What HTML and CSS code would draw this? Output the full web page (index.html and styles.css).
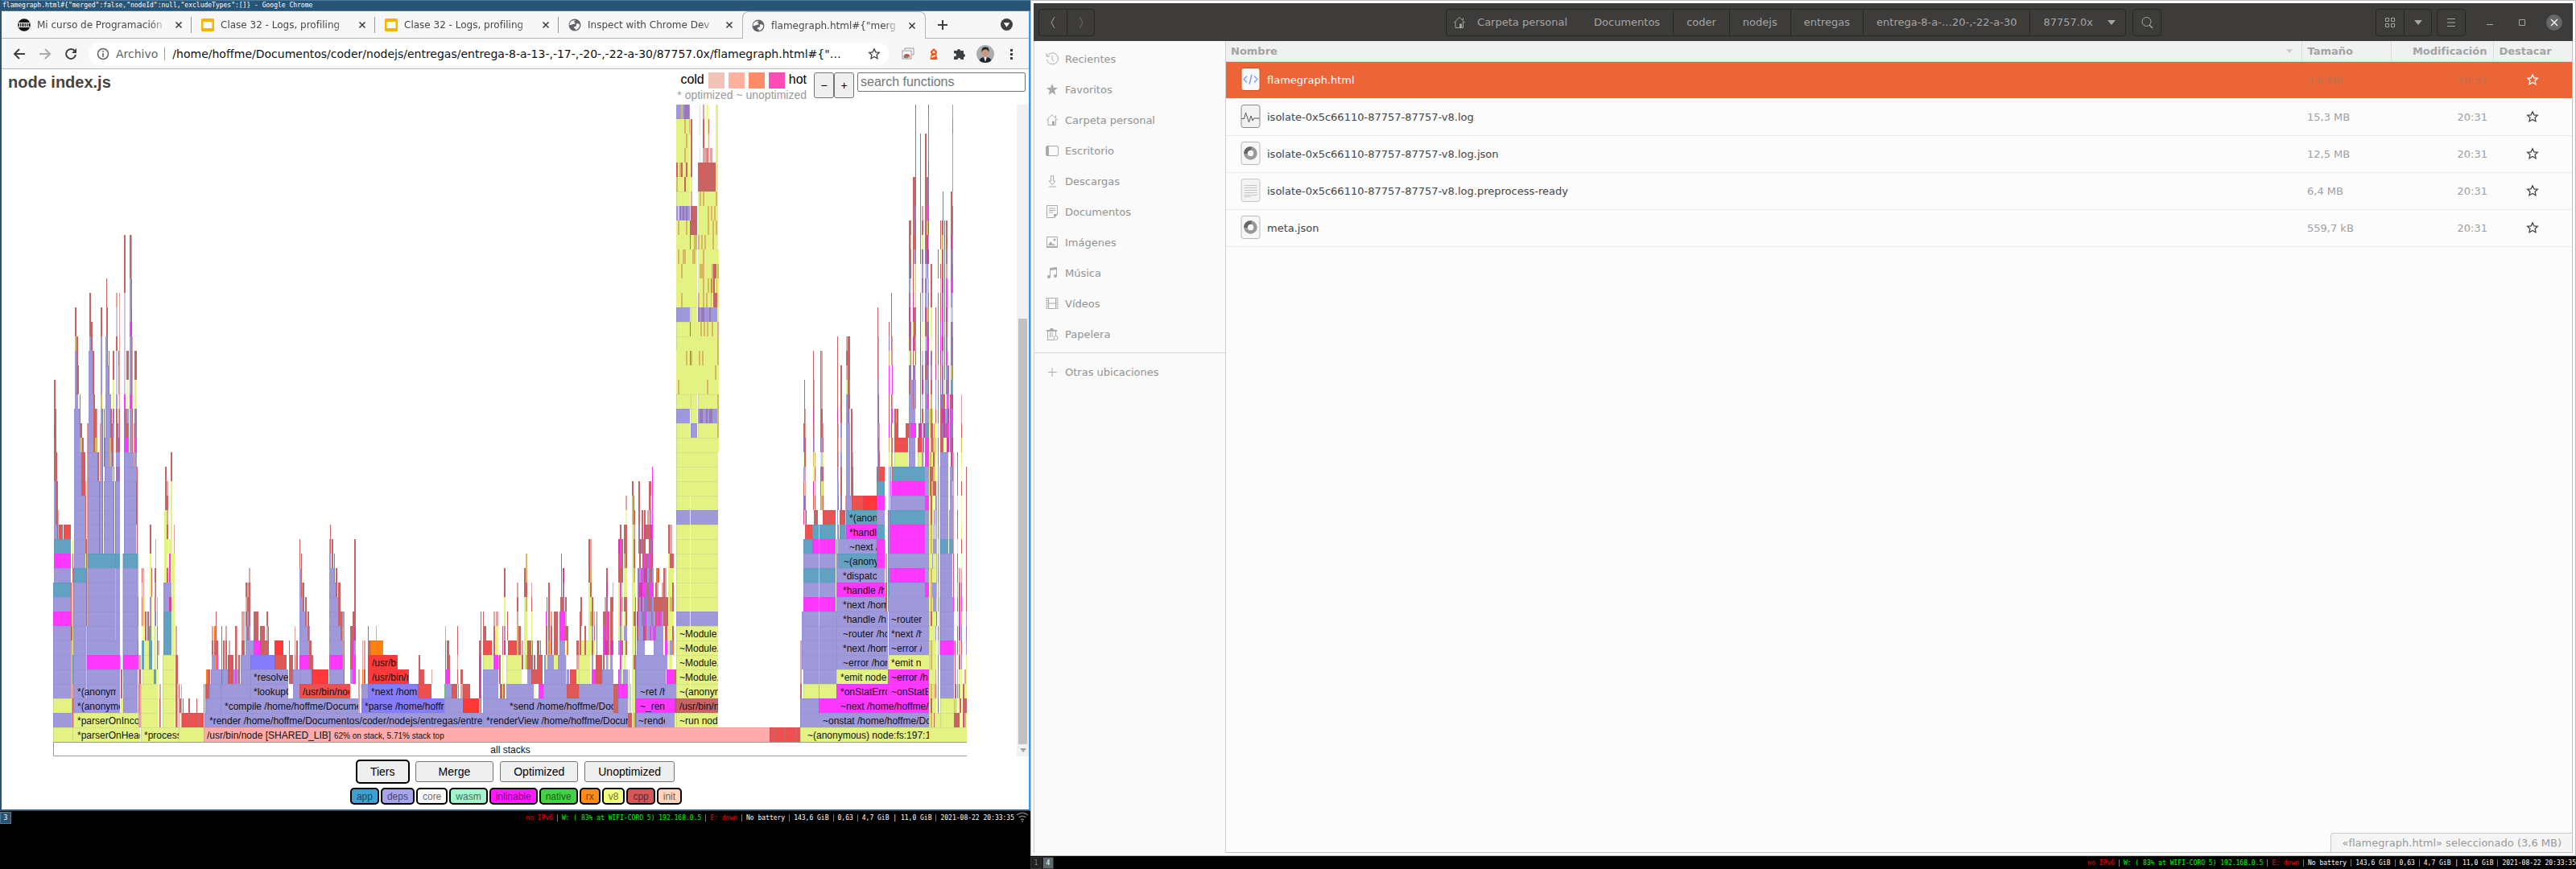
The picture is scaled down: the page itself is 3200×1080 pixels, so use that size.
FILE: index.html
```html
<!DOCTYPE html>
<html lang="es">
<head>
<meta charset="utf-8">
<title>flamegraph.html</title>
<link rel="stylesheet" href="styles.css">
</head>
<body>
<svg class="defs" aria-hidden="true">
  <symbol id="globe" viewBox="0 0 16 16"><circle cx="8" cy="8" r="7.5" fill="#5f6368"/><path d="M9 2.5c-2 .3-2.500 1.500-1 2.500s-.5 2-2 2-2 1.500-4.500 1.200C1.500 5 4 1.500 9 2.500zM10 6.500c2-.5 3.500 0 4.300 1.500-.3 3-2.300 5.600-5.300 6.200 0-2-1.500-1.700-2.500-3 1-1.700 3-1 3.500-2.200s-1-1.300 0-2.500z" fill="#f7f7f7"/></symbol>
  <symbol id="slides" viewBox="0 0 16 16"><rect width="16" height="16" rx="1.500" fill="#f7b500"/><rect x="2.500" y="4" width="11" height="8" fill="#fff"/></symbol>
  <symbol id="cross" viewBox="0 0 10 10"><path d="M1.500 1.500l7 7M8.500 1.500l-7 7" stroke="#3c4043" stroke-width="1.600"/></symbol>
  <symbol id="star" viewBox="0 0 16 16"><path d="M8 1.800l1.900 4 4.400.5-3.200 3 .9 4.400L8 11.500l-4 2.200.9-4.400-3.200-3 4.400-.5z" fill="none" stroke="currentColor" stroke-width="1.300"/></symbol>
  <symbol id="home" viewBox="0 0 16 16"><path d="M1 8.500L8 1.500l7 7M3 7v7.500h9.500V7M12.500 5V2.500" fill="none" stroke="currentColor"/><path d="M8 9.500h3V14H8z" fill="currentColor"/></symbol>
  <symbol id="json" viewBox="0 0 24 30"><rect x=".5" y=".5" width="23" height="28" rx="3" fill="#f7f7f7" stroke="#b8b8b8"/><circle cx="12" cy="14.500" r="6" fill="none" stroke="#999" stroke-width="4.500"/><path d="M6 15a6 6 0 0 1 7-6.500" fill="none" stroke="#666" stroke-width="4.500"/></symbol>
  <symbol id="arrow" viewBox="0 0 10 6"><path d="M0 0h10L5 6z" fill="currentColor"/></symbol>
</svg>

<main class="desktop">
  <section class="monitor monitor-left">
    <div class="chrome">
      <header class="wm-title">flamegraph.html#{"merged":false,"nodeId":null,"excludeTypes":[]} - Google Chrome</header>
      <nav class="tabs">
        <div class="tab"><svg class="fav" viewBox="0 0 16 16"><circle cx="8" cy="8" r="7.800" fill="#111"/><path d="M1 5.500h14M1 10.500h14M2.500 6v4M5 6v4M8 6v4M10.500 6v4M13 6v4" stroke="#eee" stroke-width="1.200"/></svg><span>Mi curso de Programación</span><button aria-label="Cerrar"><svg><use href="#cross"/></svg></button></div>
        <div class="tab"><svg class="fav"><use href="#slides"/></svg><span>Clase 32 - Logs, profiling</span><button aria-label="Cerrar"><svg><use href="#cross"/></svg></button></div>
        <div class="tab"><svg class="fav"><use href="#slides"/></svg><span>Clase 32 - Logs, profiling</span><button aria-label="Cerrar"><svg><use href="#cross"/></svg></button></div>
        <div class="tab"><svg class="fav"><use href="#globe"/></svg><span>Inspect with Chrome Dev</span><button aria-label="Cerrar"><svg><use href="#cross"/></svg></button></div>
        <div class="tab active"><svg class="fav"><use href="#globe"/></svg><span>flamegraph.html#{"merg</span><button aria-label="Cerrar"><svg><use href="#cross"/></svg></button></div>
        <button class="new-tab" aria-label="Nueva pestaña"><svg viewBox="0 0 14 14"><path d="M7 1v12M1 7h12" stroke="#3c4043" stroke-width="2"/></svg></button>
        <button class="tab-menu" aria-label="Buscar pestañas"><svg viewBox="0 0 14 14"><circle cx="7" cy="7" r="7" fill="#3c4043"/><path d="M3.500 5h7L7 10z" fill="#fff"/></svg></button>
      </nav>
      <div class="toolbar">
        <button aria-label="Atrás"><svg viewBox="0 0 16 16"><path d="M15 8H2M8 2L2 8l6 6" fill="none" stroke="#3c4043" stroke-width="2"/></svg></button>
        <button aria-label="Adelante"><svg viewBox="0 0 16 16"><path d="M1 8h13M8 2l6 6-6 6" fill="none" stroke="#aaa" stroke-width="2"/></svg></button>
        <button aria-label="Recargar"><svg viewBox="0 0 16 16"><path d="M13 4.500A6 6 0 1 0 14 9" fill="none" stroke="#3c4043" stroke-width="2"/><path d="M15 1v6H9z" fill="#3c4043"/></svg></button>
        <div class="omnibox">
          <svg viewBox="0 0 16 16"><circle cx="8" cy="8" r="6.500" fill="none" stroke="#5f6368" stroke-width="1.500"/><path d="M8 7v5M8 4v1.700" stroke="#5f6368" stroke-width="1.600"/></svg>
          <span class="scheme">Archivo</span>
          <span class="url">/home/hoffme/Documentos/coder/nodejs/entregas/entrega-8-a-13-,-17-,-20-,-22-a-30/87757.0x/flamegraph.html#{"…</span>
          <svg class="bookmark"><use href="#star"/></svg>
        </div>
        <button aria-label="Extensión"><svg viewBox="0 0 16 16"><path d="M4 3V1h11v8h-2" fill="none" stroke="#999"/><rect x="1" y="4" width="11" height="10" fill="#fff" stroke="#999"/><path d="M2.500 12a4 4 0 0 1 8 0z" fill="#ea4335"/><path d="M2.500 13a4 4 0 0 1 2-3L7 13z" fill="#34a853"/><path d="M10.500 13a4 4 0 0 0-1-2.500L7 13z" fill="#fbbc05"/><circle cx="6.500" cy="12" r="1.500" fill="#4285f4"/></svg></button>
        <button aria-label="Lighthouse"><svg viewBox="0 0 16 16"><path d="M4 5l4-4 4 4v2h-1l1.500 8h-9L5 7H4z" fill="#f4501f"/><path d="M6.500 4.500h3V7h-3zM5 11l5-2 .4 2L5 13z" fill="#fff0d0"/></svg></button>
        <button aria-label="Extensiones"><svg viewBox="0 0 16 16"><path d="M1 4h4a2 2 0 1 1 4 0h4v4a2 2 0 1 1 0 4v3H9.500a2 2 0 1 0-4 0H1v-4a2 2 0 1 0 0-3.500z" fill="#3c4043"/></svg></button>
        <button aria-label="Perfil"><svg class="avatar" viewBox="0 0 22 22"><clipPath id="face"><circle cx="11" cy="11" r="11"/></clipPath><g clip-path="url(#face)"><rect width="22" height="22" fill="#a9aeb0"/><path d="M3 22c0-6 4-7 8-7s8 1 8 7z" fill="#20242c"/><path d="M9 15h4l-2 6z" fill="#e8e8e8"/><ellipse cx="11" cy="9.500" rx="4" ry="5.500" fill="#c79a80"/><path d="M6.500 9C6 3 9 2 11.500 2.500 15 2.500 16 5 15.500 9c-1-3-2-3.500-4.500-3.500S7.500 6.500 6.500 9z" fill="#2b211d"/></g></svg></button>
        <button aria-label="Menú"><svg viewBox="0 0 16 16"><path d="M7 2h3v3H7zM7 7h3v3H7zM7 12h3v3H7z" fill="#3c4043"/></svg></button>
      </div>

      <div class="page">
        <div class="page-head">
          <h1>node index.js</h1>
          <div class="heat">
            <div class="heat-row"><span>cold</span><i class="heat-1"></i><i class="heat-2"></i><i class="heat-3"></i><i class="heat-4"></i><span>hot</span></div>
            <small>* optimized ~ unoptimized</small>
          </div>
          <div class="size-buttons"><button>−</button><button>+</button></div>
          <input class="search" type="search" aria-label="search functions" placeholder="search functions">
        </div>
        <div class="chart-row">
          <svg id="flame" class="flame" viewBox="0 0 1135 810"></svg>
          <div class="scrollbar"><div class="track"><div class="thumb"></div></div><svg viewBox="0 0 10 6"><use href="#arrow"/></svg></div>
        </div>
        <div class="modes">
          <button class="selected">Tiers</button><button class="merge">Merge</button><button>Optimized</button><button>Unoptimized</button>
        </div>
        <div class="legend">
          <button class="t-app">app</button><button class="t-deps">deps</button><button class="t-core">core</button><button class="t-wasm">wasm</button><button class="t-inl">inlinable</button><button class="t-native">native</button><button class="t-rx">rx</button><button class="t-v8">v8</button><button class="t-cpp">cpp</button><button class="t-init">init</button>
        </div>
      </div>
    </div>
    <footer class="i3bar">
      <span class="workspace focused">3</span>
      <div class="blocks"><span class="bad">no IPv6</span><span class="good">W: ( 83% at WIFI-CORO 5) 192.168.0.5</span><span class="bad">E: down</span><span>No battery</span><span>143,6 GiB</span><span>0,63</span><span>4,7 GiB | 11,0 GiB</span><span>2021-08-22 20:33:35</span></div>
      <svg class="wifi" viewBox="0 0 16 14"><path d="M1 4a10 10 0 0 1 14 0M3.500 7a7 7 0 0 1 9 0M6 10a3 3 0 0 1 4 0" fill="none" stroke="#777" stroke-width="1.500"/><circle cx="8" cy="12" r="1" fill="#777"/></svg>
    </footer>
  </section>

  <section class="monitor monitor-right">
    <div class="files">
      <header class="headerbar">
        <div class="group"><button aria-label="Atrás"><svg viewBox="0 0 16 16"><path d="M10 1L6 8l4 7" fill="none" stroke="currentColor"/></svg></button><button class="dim" aria-label="Adelante"><svg viewBox="0 0 16 16"><path d="M6 1l4 7-4 7" fill="none" stroke="currentColor"/></svg></button></div>
        <div class="path">
          <div class="group crumbs"><button><svg><use href="#home"/></svg>Carpeta personal</button><button>Documentos</button><button>coder</button><button>nodejs</button><button>entregas</button><button>entrega-8-a-…20-,-22-a-30</button><button>87757.0x<svg class="tri"><use href="#arrow"/></svg></button></div>
          <div class="group"><button aria-label="Buscar"><svg viewBox="0 0 16 16"><circle cx="7.500" cy="7" r="5.500" fill="none" stroke="currentColor"/><path d="M11 11l4 4" stroke="currentColor" stroke-width="1.500"/></svg></button></div>
        </div>
        <div class="group"><button aria-label="Vista"><svg viewBox="0 0 16 16"><path d="M2.500 2.500h4v4h-4zM9.500 2.500h4v4h-4zM2.500 9.500h4v4h-4zM9.500 9.500h4v4h-4z" fill="none" stroke="currentColor"/></svg></button><button aria-label="Opciones de vista"><svg class="tri"><use href="#arrow"/></svg></button></div>
        <div class="group"><button aria-label="Menú"><svg viewBox="0 0 16 16"><path d="M3 3.500h10M3 8h10M3 12.500h10" stroke="currentColor"/></svg></button></div>
        <div class="window-buttons">
          <button aria-label="Minimizar"><svg viewBox="0 0 16 16"><path d="M4 10.500h8" stroke="currentColor"/></svg></button>
          <button aria-label="Maximizar"><svg viewBox="0 0 16 16"><path d="M4.500 4.500h7v7h-7z" fill="none" stroke="currentColor"/></svg></button>
          <button class="close" aria-label="Cerrar"><svg viewBox="0 0 16 16"><path d="M4 4l8 8M12 4l-8 8" stroke="#eee" stroke-width="1.500"/></svg></button>
        </div>
      </header>
      <div class="files-body">
        <nav class="places">
          <a href="#recientes"><svg viewBox="0 0 16 16"><path d="M2 5a7 7 0 1 1-.5 4M1 1v4h4M8 4v5l2 2" fill="none" stroke="currentColor"/></svg>Recientes</a>
          <a href="#favoritos"><svg viewBox="0 0 16 16"><path d="M8 1l2 5h5l-4 3.500 1.500 5.500L8 12l-4.500 3L5 9.500 1 6h5z" fill="currentColor"/></svg>Favoritos</a>
          <a href="#personal"><svg><use href="#home"/></svg>Carpeta personal</a>
          <a href="#escritorio"><svg viewBox="0 0 16 16"><rect x=".5" y="2.500" width="15" height="12" rx="1.500" fill="none" stroke="currentColor"/><path d="M1 3h3v11H1z" fill="currentColor"/></svg>Escritorio</a>
          <a href="#descargas"><svg viewBox="0 0 16 16"><path d="M6.500 1.500h3V8H12l-4 4.500L4 8h2.500zM4 15h9" fill="none" stroke="currentColor"/></svg>Descargas</a>
          <a href="#documentos"><svg viewBox="0 0 16 16"><path d="M1.500.5h13V11L11 15.500H1.500zM4 4h8M4 6.500h8M4 9h5" fill="none" stroke="currentColor"/><path d="M10 11h5l-4.500 5z" fill="currentColor"/></svg>Documentos</a>
          <a href="#imagenes"><svg viewBox="0 0 16 16"><path d="M1.500 1.500h13v13h-13zM2 13.500h12" fill="none" stroke="currentColor"/><path d="M3 12l3-5 3 4 1-1 2 2z" fill="currentColor"/><circle cx="11" cy="5" r="1.500" fill="currentColor"/></svg>Imágenes</a>
          <a href="#musica"><svg viewBox="0 0 16 16"><path d="M5.500 13V2.500l8-1V12" fill="none" stroke="currentColor"/><path d="M5 2.500l9-1.200V4L5 5z" fill="currentColor"/><circle cx="4" cy="13" r="2" fill="currentColor"/><circle cx="12" cy="12" r="2" fill="currentColor"/></svg>Música</a>
          <a href="#videos"><svg viewBox="0 0 16 16"><path d="M3.500 1.500h9v13h-9zM3.500 8h9" fill="none" stroke="currentColor"/><path d="M1.500 1v14M14.500 1v14" stroke="currentColor" stroke-width="2" stroke-dasharray="1.500 1"/></svg>Vídeos</a>
          <a href="#papelera"><svg viewBox="0 0 16 16"><path d="M2.500 4v11.500h8M12.500 4v6M5.500 6v6M8 6v6" fill="none" stroke="currentColor"/><path d="M1 3h4l1-2h3l1 2h4v2H1z" fill="currentColor"/><circle cx="12.500" cy="13" r="2.500" fill="none" stroke="currentColor"/></svg>Papelera</a>
          <a class="other" href="#otras"><svg viewBox="0 0 16 16"><path d="M8 3v11M3 8.500h11" stroke="currentColor"/></svg>Otras ubicaciones</a>
        </nav>
        <div class="listing">
          <table>
            <colgroup><col><col class="col-size"><col class="col-time"><col class="col-star"></colgroup>
            <thead><tr><th><div class="sort">Nombre<svg><use href="#arrow"/></svg></div></th><th>Tamaño</th><th class="num">Modificación</th><th>Destacar</th></tr></thead>
            <tbody>
              <tr class="selected"><td><div class="name"><svg viewBox="0 0 24 30"><rect x=".5" y=".5" width="23" height="28" rx="3" fill="#f8f8fb" stroke="#c9512b"/><path d="M7.500 10.500l-4 4 4 4M16.500 10.500l4 4-4 4M13.500 8.500l-3 12" fill="none" stroke="#739df5" stroke-width="1.300"/></svg>flamegraph.html</div></td><td>3,6 MB</td><td class="num">20:31</td><td class="mark"><svg><use href="#star"/></svg></td></tr>
              <tr><td><div class="name"><svg viewBox="0 0 24 30"><rect x=".5" y=".5" width="23" height="28" rx="3" fill="#f2f2f2" stroke="#888"/><path d="M1 17.500h3L6 10l4 12 2.500-8 2 6 1.500-3h7" fill="none" stroke="#555"/></svg>isolate-0x5c66110-87757-87757-v8.log</div></td><td>15,3 MB</td><td class="num">20:31</td><td class="mark"><svg><use href="#star"/></svg></td></tr>
              <tr><td><div class="name"><svg><use href="#json"/></svg>isolate-0x5c66110-87757-87757-v8.log.json</div></td><td>12,5 MB</td><td class="num">20:31</td><td class="mark"><svg><use href="#star"/></svg></td></tr>
              <tr><td><div class="name"><svg viewBox="0 0 24 30"><rect x=".5" y=".5" width="23" height="28" rx="3" fill="#f3f3f3" stroke="#c4c4c4"/><path d="M4 8.500h16M4 11.500h16M4 14.500h16M4 17.500h16M4 20.500h16M4 22.500h8" stroke="#c4c4c4"/></svg>isolate-0x5c66110-87757-87757-v8.log.preprocess-ready</div></td><td>6,4 MB</td><td class="num">20:31</td><td class="mark"><svg><use href="#star"/></svg></td></tr>
              <tr><td><div class="name"><svg><use href="#json"/></svg>meta.json</div></td><td>559,7 kB</td><td class="num">20:31</td><td class="mark"><svg><use href="#star"/></svg></td></tr>
            </tbody>
          </table>
          <div class="floating">«flamegraph.html» seleccionado (3,6 MB)</div>
        </div>
      </div>
    </div>
    <footer class="i3bar">
      <span class="workspace">1</span><span class="workspace visible">4</span>
      <div class="blocks"><span class="bad">no IPv6</span><span class="good">W: ( 83% at WIFI-CORO 5) 192.168.0.5</span><span class="bad">E: down</span><span>No battery</span><span>143,6 GiB</span><span>0,63</span><span>4,7 GiB | 11,0 GiB</span><span>2021-08-22 20:33:35</span></div>
    </footer>
  </section>
</main>
<script src="flame.js"></script>
</body>
</html>
```
FILE: styles.css
```css
* { box-sizing: border-box; }
body { margin: 0; background: #000; font-family: "DejaVu Sans", sans-serif; font-size: 13px; }
button { font: inherit; color: inherit; background: none; border: 0; padding: 0; margin: 0; }
a { color: inherit; text-decoration: none; }
svg { display: block; flex: none; }
.defs { position: absolute; width: 0; height: 0; }
.desktop { display: grid; grid-template-columns: 2fr 3fr; min-height: 100vh; }
.monitor { display: flex; flex-direction: column; min-width: 0; }

/* Browser window */
.chrome { border: solid #285577; border-width: 0 2px 2px; border-right-color: #2e9ef4; background: #f7f7f7; }
.wm-title { height: 14px; margin-right: -2px; padding-left: 1px; background: #285577; border: solid #4c7899; border-width: 1px 0; color: #fff; font: 8px/12px "DejaVu Sans Mono", monospace; white-space: pre; }
.tabs { display: flex; height: 34px; padding-left: 8px; border-bottom: 1px solid #b5b5b5; color: #45484b; font-size: 12px; }
.tab { display: flex; align-items: center; width: 228px; padding: 0 9px 0 12px; gap: 8px; position: relative; }
.tab:nth-child(-n+3)::after { content: ""; position: absolute; right: 0; top: 7px; bottom: 6px; width: 1px; background: #999; }
.tab span { flex: 1; overflow: hidden; white-space: nowrap; mask-image: linear-gradient(90deg, #000 88%, transparent); }
.fav { width: 16px; height: 16px; }
.tab button svg { width: 10px; height: 10px; }
.tab button { padding: 2px; }
.tab.active { background: #f7f7f7; border: 1px solid #b5b5b5; border-bottom: 0; border-radius: 8px 8px 0 0; height: 34px; padding-left: 11px; }
.new-tab { margin-left: 14px; }
.new-tab svg { width: 14px; height: 14px; }
.tab-menu { margin: 0 20px 0 auto; }
.tab-menu svg { width: 15px; height: 15px; }
.toolbar { display: flex; align-items: center; gap: 16px; height: 38px; padding: 0 14px; border-bottom: 1px solid #b9b9b9; }
.toolbar svg { width: 16px; height: 16px; }
.toolbar .avatar { width: 22px; height: 22px; margin: 0 -3px; }
.omnibox { flex: 1; min-width: 0; display: flex; align-items: center; height: 28px; padding: 0 10px; margin-left: -2px; border-radius: 14px; background: #fff; font-size: 14px; color: #111; }
.scheme { color: #5f6368; padding: 0 8px; border-right: 1px solid #9a9a9a; line-height: 16px; }
.url { flex: 1; padding-left: 9px; overflow: hidden; white-space: nowrap; }
.bookmark { color: #3c4043; }

/* Flamegraph page */
.page { background: #fff; font-family: "Liberation Sans", sans-serif; padding-bottom: 6px; }
.page-head { display: flex; align-items: flex-start; height: 44px; padding: 4px 4px 0 8px; }
h1 { flex: 1; margin: 0; font-size: 20px; line-height: 24px; color: #444; }
.heat { display: flex; flex-direction: column; align-items: flex-end; margin-right: 9px; }
.heat-row { display: flex; gap: 5px; font-size: 16px; line-height: 18px; height: 20px; }
.heat i { width: 20px; height: 20px; }
.heat-1 { background: #f0c2b8; }
.heat-2 { background: #ffb09e; }
.heat-3 { background: #ff8c66; }
.heat-4 { background: #ff4db8; }
.heat small { font-size: 14px; line-height: 16px; color: #999; }
.size-buttons { display: flex; margin-right: 4px; }
.size-buttons button { width: 25px; height: 32px; border: 1px solid #767676; border-radius: 3px; background: #efefef; font-size: 14px; }
.search { appearance: none; width: 209px; height: 24px; margin: 0; padding: 0 3px; border: 1px solid #767676; border-radius: 2px; font: 16px "Liberation Sans", sans-serif; }
.search::placeholder { color: #757575; }
.chart-row { display: flex; align-items: stretch; padding-left: 64px; }
.flame { flex: 1; min-width: 0; margin-right: 62px; }
.flame text { font: 12px "Liberation Sans", sans-serif; fill: #111; }
.flame text.small { font-size: 10px; }
.scrollbar { width: 15px; background: #f1f1f1; display: flex; flex-direction: column; align-items: center; color: #a0a0a0; }
.scrollbar svg { width: 8px; height: 5px; margin: 5px; }
.track { flex: 1; display: flex; align-items: flex-end; }
.thumb { width: 11px; height: 66.500%; background: #c1c1c1; }
.modes { display: flex; justify-content: center; align-items: center; gap: 8px; height: 38px; }
.modes button { height: 26px; padding: 0 16px; border: 1px solid #767676; border-radius: 3px; background: #efefef; font-size: 14px; }
.modes .merge { padding: 0 28px; }
.modes .selected { height: 30px; border: 2px solid #000; border-radius: 5px; margin-right: -1px; }
.legend { display: flex; justify-content: center; gap: 2px; margin: 1px 0 0 2px; }
.legend button { height: 21px; padding: 0 6px; border: 2px solid #000; border-radius: 5px; font-size: 12px; color: #0009; }
.t-app { background: #40a0d4; }
.t-deps { background: #a9a3ea; }
.t-core { background: #f8f8f8; }
.t-wasm { background: #a0f5cf; }
.t-inl { background: #ff1aff; }
.t-native { background: #44d044; }
.t-rx { background: #ff8c1a; }
.t-v8 { background: #f1ff86; }
.t-cpp { background: #d65757; }
.t-init { background: #ffd3bd; }

/* Status bars */
.i3bar { display: flex; align-items: center; height: 16px; background: #000; color: #fff; font: 8px "DejaVu Sans Mono", monospace; white-space: pre; }
.workspace { width: 14px; height: 15px; line-height: 14px; text-align: center; background: #222; border: 1px solid #333; color: #888; }
.workspace.focused { background: #285577; border-color: #4c7899; color: #fff; }
.workspace.visible { background: #5f676a; color: #fff; margin-left: 1px; }
.blocks { display: flex; margin-left: auto; gap: 5px; }
.blocks span + span { padding-left: 5px; border-left: 1px solid #777; }
.blocks .bad { color: #f00; }
.blocks .good { color: #0f0; }
.wifi { width: 16px; height: 14px; margin: 0 2px; }

/* File manager */
.files { flex: 1; display: flex; flex-direction: column; border: 1px solid #bcbcbc; padding: 3px; background: #fbfbfb; }
.monitor-right { height: 100vh; }
.headerbar { display: flex; align-items: center; height: 47px; padding: 0 10px 0 6px; background: #3d3c3a; color: #a5a5a3; }
.group { display: flex; height: 34px; border: 1px solid #262624; border-radius: 4px; }
.group button { display: flex; align-items: center; justify-content: center; min-width: 34px; }
.group button + button { border-left: 1px solid #262624; }
.group svg { width: 16px; height: 16px; }
.group .tri { width: 10px; height: 6px; }
.headerbar .dim { color: #6c6c6a; }
.path { flex: 1; display: flex; justify-content: center; gap: 8px; padding-left: 170px; white-space: nowrap; }
.crumbs button { padding: 0 16px; gap: 14px; }
.crumbs button:first-child { padding: 0 16px 0 8px; }
.crumbs button:nth-child(2) { border-left-color: transparent; }
.crumbs button:last-child { gap: 18px; padding-right: 12px; }
.headerbar > .group + .group { margin-left: 6px; }
.window-buttons { display: flex; gap: 20px; margin-left: 20px; padding-right: 3px; }
.window-buttons svg { width: 16px; height: 16px; margin: 2px; }
.close { border-radius: 50%; background: #666; }
.files-body { flex: 1; display: flex; }
.places { width: 239px; border: solid #d0d0d0; border-width: 0 1px; background: #fafafa; padding-top: 3px; color: #929292; }
.places a { display: flex; align-items: center; gap: 8px; height: 38px; padding-left: 14px; }
.places svg { width: 16px; height: 16px; color: #aaa; }
.places .other { height: 47px; margin-top: 4px; border-top: 1px solid #d6d6d6; }
.listing { flex: 1; position: relative; border: solid #bcc0be; border-width: 0 1px 1px 0; background: #fcfcfc; }
table { width: 100%; border-collapse: collapse; table-layout: fixed; color: #444; }
th, td { padding: 0 7px; text-align: left; white-space: nowrap; }
th { height: 25px; background: #f0f2f1; color: #a3a3a3; border-bottom: 1px solid #dcdcdc; border-right: 1px solid #dcdcdc; }
th:last-child { border-right: 0; }
th:first-child { padding-left: 6px; }
td { height: 46px; border-bottom: 1px solid #ececec; color: #a0a0a0; }
td:first-child { padding-left: 18px; color: #444; }
th.num, td.num { text-align: right; }
.col-size { width: 111px; }
.col-time { width: 127px; }
.col-star { width: 98px; }
.sort { display: flex; align-items: center; justify-content: space-between; color: #a3a3a3; }
.sort svg { width: 10px; height: 5px; color: #ccc; margin-right: 3px; }
.name { display: flex; align-items: center; gap: 8px; }
.name svg { width: 25px; height: 30px; }
.mark svg { width: 16px; height: 16px; margin: 0 auto; color: #444; }
.selected td { background: #ec6536; color: #b9714f; }
.selected td:first-child, .selected .mark svg { color: #fff; }
.floating { position: absolute; right: 0; bottom: 0; height: 24px; padding: 0 13px; line-height: 23px; background: #f5f5f5; border: solid #ccc; border-width: 1px 0 0 1px; border-radius: 4px 0 0 0; color: #999; }
```
FILE: flame.js
```js
const TIER = {
  d: '#9f99dc', b: '#857dfb', l: '#cac7ef', v: '#e4f283', y: '#f0f8b8', t: '#d7b862',
  i: '#ff38ff', m: '#d23fa0', a: '#63a1c3', s: '#ffabab', o: '#ff7f11', g: '#66bb77',
  c: '#de5858', C: '#c96464', p: '#dfa5a5', r: '#ee5050', h: '#ff3939', w: '#ffffff', P: '#9a78b8'
};
// Each stack: x, width, first level, then runs of tier + number of levels.
const STACKS = `
66 24 0 v|66 23 1 d|66 24 2 v|66 23 3 d5i|66 22 9 da|67 21 11 dia|67 4 14 d|71 7 14 c|79 9 14 r|88 1 3 p4C4|89 1 1 p6C1
67 2 15 d3C7|69 1 15 C8|70 1 15 C5|71 1 15 C3|72 1 14 p2|67 1 21 m
90 84 0 v|91 81 1 v|91 58 2 d|150 3 2 v|153 18 2 d|172 3 1 p1C2p2|90 1 1 C2p1a2v2p3C2v1
91 17 3 d8a|92 15 12 d6|92 9 18 d3|101 5 17 c3|106 1 12 v1C4p1|99 3 20 t1C1|92 8 21 d2|93 4 23 d4|93 2 27 t1C2|95 2 24 C4|97 1 24 C2|99 1 21 C3|102 2 20 C|107 1 3 l5C6
108 41 3 d2id6a|109 14 13 d5|109 12 18 d2|109 8 20 d2|110 6 22 d2|110 5 24 d3|111 3 27 d|111 2 28 C3|113 2 27 C2|115 2 24 C3|116 2 20 C4|118 3 20 t1c2|120 1 21 p2|121 2 18 C2|123 1 13 C5|108 1 8 p14
124 4 13 d6|125 2 19 d4t1d4C2|127 1 13 C10|124 1 18 p4
129 13 13 d5|130 10 18 d3|131 7 21 d3|131 4 24 d2|131 3 26 d2|132 1 28 C4|133 1 26 C4|135 1 24 C3|137 2 20 C3|136 2 19 t2|139 2 19 C3|141 1 13 C6|140 2 21 dPvvCC|129 1 19 m4
144 5 13 d5P1d1P2|144 2 20 C3d1l3C1l2p1|147 1 20 m1t2v1d2C1|148 1 19 dC3p8|143 1 7 p5i1C5
153 18 3 d2id6a|154 16 13 d7|154 2 20 P3i1l7C4|156 1 21 C2|157 3 20 C2d1y2C2|156 4 20 i|161 3 20 d3i1d4i1d3C3|163 1 23 C4i1m2C2p3|164 1 20 C3p5|167 3 20 i1P2v2C2|169 1 13 v2C3|170 1 13 C6|166 1 19 p3|171 1 5 i2d1i2p3|150 2 3 C2|152 1 5 l8
175 47 0 v|222 31 0 v|175 22 1 v3|177 18 4 v1|178 7 5 v2|176 3 5 a2|176 1 7 yCCpC|178 1 7 v1t2p2|180 2 7 C2|183 2 7 C2|185 4 5 a3|186 2 8 ddvvvCC|188 1 7 v3C2|191 3 4 a1v3|192 1 8 dCpC|193 1 8 CtCCp2|195 1 5 C3p2|197 3 1 C2p1|196 2 1 y5p1|199 1 1 p3|173 2 1 p3C1
202 15 1 v5|203 10 6 a3|203 9 9 d2|204 3 11 v5|205 2 16 C3|207 2 11 CyvCpCp|210 3 9 m1d1i2v1|212 2 11 v7C2|214 3 6 v7|216 1 12 v1p2|218 2 1 C5p2|220 1 1 p3C2|222 1 1 p2C1|223 2 1 y1C1|225 1 1 p3
226 27 1 r|227 1 2 C|234 2 2 C|244 1 2 C|234 1 1 C|246 2 1 C|253 1 2 C2
253 703 0 s|254 346 1 d|255 7 2 dc|256 2 4 o|258 3 4 C|257 17 2 d|260 14 3 d|262 14 4 d|263 5 5 d|263 2 6 Cp|266 2 6 Co|268 1 5 oCCC|269 2 5 i1C1|275 1 4 C4|277 2 4 aCC|280 2 5 CCp|274 37 3 d|276 20 4 d|283 7 4 c2|284 2 6 p|292 2 4 iCCC|294 1 4 d1p3|296 2 4 C2|299 14 4 d2|300 4 6 Cp2|305 2 6 ddCpC|307 3 6 dCdCp|309 2 6 ddCCCp|274 171 2 d|311 44 3 d2|311 30 5 b|311 4 6 d|315 8 6 i|323 10 6 C|315 6 7 CC|323 6 7 C|331 2 7 pC|333 1 6 C2|341 11 6 h|341 15 5 c|355 3 3 d2|359 5 4 C2|359 1 6 C|364 8 3 d2|366 1 5 Cpp|368 2 5 C2
372 63 3 r|372 15 4 d|387 21 4 h|372 14 5 i|372 13 6 d2|372 9 8 d|372 6 9 d1|372 4 10 d|372 2 11 d|372 1 12 CC|374 1 10 C3|376 2 9 C2|379 2 8 C2|382 2 7 C2|384 3 5 C2|387 2 5 C1
409 19 4 did3|409 14 8 d2|409 10 10 d|409 6 11 d|409 2 12 d2|410 1 13 CC|412 2 12 CC|415 1 11 C2|417 2 10 C2|420 3 8 C3|423 2 7 C2|426 1 5 p3|427 1 4 C3
435 3 4 dCCC|438 2 4 iiiCC|440 2 4 iidmC6|445 2 2 p3
449 103 2 b|449 8 3 d|450 1 4 opp|452 2 4 C1p2|457 62 3 b|457 51 4 h|457 37 5 h|457 3 6 C|460 16 6 o|457 1 7 C|467 1 7 p|519 17 3 r|520 7 4 c|520 2 5 C|536 1 4 p
552 23 2 d|552 9 3 d|552 1 3 g|553 5 4 i|553 1 5 CCp|555 3 5 C2|558 1 4 C2|561 7 3 c|569 1 3 g|568 1 4 CpCC|572 3 3 pC|575 20 2 h|575 9 3 c|595 3 2 p1m3C1|597 1 2 i5C2
600 180 1 d|600 162 2 d|600 19 3 dd|600 12 5 v|600 11 6 r|600 4 7 C|600 1 8 C|613 6 5 i|613 2 6 C2p|616 3 6 v2p|620 2 4 CC|621 6 3 c|624 1 3 v3C2|626 2 6 mdvvCC|629 34 3 d|629 19 4 vv|631 11 6 r|630 1 7 CC|642 2 6 ttpCp|644 3 6 C2|648 2 5 Cp|651 2 5 vvvvvCC|653 2 5 tvvvtCtt|655 5 4 d|655 7 5 C2|660 9 4 c|660 1 6 vvvCp|663 2 3 y1C2|669 6 3 i|669 5 4 c2|667 3 5 C2|671 1 6 C
675 29 3 d|676 31 4 d|676 27 5 d|678 2 5 vCCi|679 1 8 p1C1|681 2 6 oCCCC|684 2 6 CCp|688 5 5 v|688 5 6 CCC|695 7 6 dii|696 5 9 C|697 1 10 CCC|699 2 9 PPm|702 2 7 CpC|704 15 3 c|708 8 4 r|704 2 6 oC|703 1 4 v2
719 43 3 d|719 14 4 vv|720 12 6 v|720 2 6 C3|721 2 8 CC|726 2 6 CC|731 2 6 vvvvvCCC|733 2 6 vvtvCtpp|735 5 4 i|735 2 5 dCdCC|738 1 6 vCp|740 8 4 cc|741 1 6 CCC|748 14 4 d|749 2 5 CiiC|751 2 6 mCCp|753 2 5 dmiiPmC|755 2 5 vCCC|758 3 5 dmCCC|761 1 6 CptCp|762 6 2 CC|716 3 4 vpC
768 12 2 dii|769 11 4 d|768 2 6 dvvvvCCm|770 2 5 iidiiiCiiC|772 2 4 vvCvvtvCCC|775 2 5 vvdvCvvtCC|777 2 6 CdCCvvCCCyp|780 5 1 C|781 1 2 p3|783 1 2 p2
785 2 1 vvvvvvvvvvvvvvttC|787 2 1 tvvvCvvCvvtCCpC|789 1 1 C9
790 48 1 d|790 48 2 i|790 37 3 d3|791 10 6 d|826 12 3 d|828 10 4 i|826 3 5 diC|830 2 5 yvvvvvvvCC|832 3 5 vdvvtvvCpp|835 2 6 oCvCCvC|838 2 1 vmdC|812 12 6 dd|810 1 9 mmmmmiiiii
840 52 1 vCv5dv6dv5|840 17 21 vd|858 8 21 dv5d|867 25 21 vd|857 1 3 y14|840 17 23 v6dv6|858 8 28 v7|867 22 23 v6dv8|889 3 23 v21|840 17 36 dv6d|858 8 35 CC|858 2 37 p1v1C4|867 22 38 CC
869 1 40 vyvv|873 2 40 pCCp|875 5 40 p|878 1 40 Cyvv|882 3 40 p|880 1 40 ppCy
956 38 0 r|961 2 0 C|974 2 0 C|988 2 0 C|994 207 0 v|994 160 1 d|994 23 2 d|1017 137 2 i
994 2 3 Cp3|998 41 3 vd|1039 64 3 iv|1103 51 3 ii|996 43 5 d4|1039 64 5 d4|1104 50 6 d3|1103 51 5 v|998 40 9 ida|998 40 12 d|1039 62 9 d|1039 60 10 id|1103 51 9 dd|1103 47 11 idi3|998 11 13 a|1009 29 13 ia|1000 9 14 r|1039 50 12 ad|1041 1 14 i|1043 8 14 ac|1051 38 14 ia|1089 10 11 diiad1iar|1051 7 16 d|1058 14 16 r|1072 17 16 h|1011 5 15 C|1022 16 15 r|1028 1 15 C|1106 44 15 ad1iad0|1017 1 3 p5l7
1106 44 15 a|1106 44 16 d|1106 44 17 i|1106 44 18 a|1111 17 19 vr|1129 8 19 dddddd|1140 8 19 vr|1111 5 21 cc|1125 5 21 c|1131 7 21 i|1141 9 21 m|1149 5 9 didddddi|1149 5 17 ddiiadiadPP
999 1 15 vCvtCCCCCC|1000 1 15 pPppCCpp|1001 1 14 Pm1|998 1 15 mPCdyPC
1010 1 16 CmvtPCmCCCC|1012 1 16 CpCt|1011 1 20 ppppp
1019 1 16 dCPvCPPiCCC|1020 2 16 tvPldCCpppp|1022 1 16 CtCvCp
1040 1 12 dlddddPCCCmCCCCC|1041 1 16 idlplp|1044 2 16 PCCdpdCCCC|1050 1 14 dlp
1051 2 17 dddddddvpCp|1053 2 17 dddddPCCCCC|1055 1 17 dddddlCoCCC|1057 2 17 CCCCCC|1059 1 17 mCp
1090 1 18 PdPPPPPCCCCC|1091 1 18 CCCdCCpppp|1092 1 18 CCpp
1100 2 9 CCp2|1104 1 10 aadddddddvtiCCiitPC|1107 1 17 vvddmiCvydPPCC|1108 1 18 CtCyipiipp|1113 1 21 Cp
1129 2 23 dCPvCmmPdPCCC|1131 1 23 ddCCPPvvvmCtC|1134 1 23 CPPCmtmmCCCCCCCC|1135 2 23 ddPyCCCyyydCPPCC|1137 1 23 ddvCpPPlllPCCPCCCCCCC
1143 1 22 CPPCmmmPCyymiiCCCCCC|1145 2 19 ddlClmPlyyllPdPvCp|1149 2 23 ddCPlCmdPlPCCCCCCCC|1151 2 24 dPmiPtlldmmtiPP|1153 1 24 PdPmCdPtvmtmPCPmPiPC
1154 9 1 v8|1154 5 9 vvvvvvvvvvvvvv|1156 2 1 tCtvttvCtttvttCCCCCpCCtCdPyvvCCC|1160 1 1 CvtvvvvPvvtCvdPvvtCCt|1162 1 3 CpvvdvvdCvvddPCCPtCCddmCCCC|1158 6 10 dvd|1159 5 8 vddvvdl
1163 5 1 v|1165 1 2 miiCtCvPdCPtCCiCdPClCCPpmmCCCyCC|1167 1 2 y4p4l9y3
1168 17 1 vvddd|1168 17 6 id3|1168 15 10 ddd|1168 10 13 add|1179 5 13 add|1168 10 16 dddd|1180 4 16 ddd
1163 1 8 Clp7|1168 1 20 mdiPPCmiPCCpCyCC|1170 2 20 immdPPdmiiPmCCtC|1171 1 36 CC|1173 1 20 yiPClCPPdiCCCPmC|1175 2 20 CPmlPdiPCmiipPCC|1177 2 20 mimdPP|1181 2 19 mPPiCatPPPldiPPmCCC|1183 1 17 lidmmagdPiCdlliiddPPlddddPd|1184 1 9 i1C3p7
1185 5 1 Cp|1186 1 1 CvCCCC|1189 1 1 tCapvCCvCtCCvPCvCCC|1191 2 1 vCmvCpmiCCp|1194 1 1 vCyvdCatiPpyCvyyCyvtCpp|1196 5 1 C3|1198 2 1 pCvp|1200 1 1 vCvvvdPdCCCCCCCCCC`;
// Dense sampled areas: x, width, first level, levels, palette ("." leaves a gap).
const DENSE = `
791 24 7 2 ddmiCidP|792 20 9 3 CCmPiPCd|794 16 12 2 CCPm.C.i|800 10 14 1 CCm.C|800 6 15 1 C.p|812 18 8 1 dCiPCC|812 18 9 1 CCpC|814 14 10 1 CC.p|815 4 11 1 oCC|822 8 11 1 pC.|787 1 16 1 C|793 2 13 5 CP|797 2 14 2 Cp|806 3 15 3 CPp
840 17 30 6 vvvvvvvt|840 17 36 1 ddldP|840 17 38 2 vvvtvC|840 17 40 3 vvvvt|840 17 43 1 ddPt|867 25 29 1 ddddP|867 25 22 1 ddddP|867 25 30 3 tvCvvtv|867 25 33 5 vtvvtvv|858 8 30 5 vvvt|884 8 30 3 CvtC|840 52 24 3 vvvvvvvvvvt|858 34 27 2 vvvvvt|867 22 38 2 CCCCc|891 2 20 14 vtp
857 1 23 14 vC|1155 8 17 6 .vCt|1168 9 20 4 mCidPy|1180 4 20 4 mPiC|1186 9 1 3 vCy.`;
const LABELS = `
96 78 0 *parserOnHead|179 43 0 *process|96 76 1 *parserOnInco|96 53 2 *(anonymo|96 48 3 *(anonym
257 220 0 /usr/bin/node [SHARED_LIB]|260 339 1 *render /home/hoffme/Documentos/coder/nodejs/entregas/entre|279 166 2 *compile /home/hoffme/Docume|315 43 4 *resolve|315 43 3 *lookupC|376 58 3 /usr/bin/noc|453 99 2 *parse /home/hoffr|461 57 3 *next /hom|462 45 4 /usr/bin/r|462 31 5 /usr/bi
604 176 1 *renderView /home/hoffme/Docur|633 129 2 *send /home/hoffme/Doc|793 33 1 ~rende|795 31 2 ~_rend|795 31 3 ~ret /h
844 47 1 ~run nod|844 48 2 /usr/bin/n|844 48 3 ~(anonyr|844 48 4 ~Module.|844 48 5 ~Module.|844 48 6 ~Module.|844 48 7 ~Module
1003 151 0 ~(anonymous) node:fs:197:1|1022 132 1 ~onstat /home/hoffme/Dc|1044 110 2 ~next /home/hoffme/|1044 58 3 *onStatErrc|1044 58 4 *emit node:|1047 55 5 ~error /hor|1047 55 6 *next /hom|1047 55 7 ~router /hc|1047 55 8 *handle /h|1047 54 9 *next /hom|1047 52 10 *handle /h|1047 42 11 *dispatc|1048 41 12 ~(anony|1055 34 13 ~next /|1055 34 14 *handl|1055 34 15 *(anon
1107 46 3 ~onStatE|1107 46 4 ~error /hc|1107 38 5 *emit n|1107 38 6 ~error /|1107 38 7 *next /h|1107 38 8 ~router`;

const NS = 'http://www.w3.org/2000/svg';
const chart = document.getElementById('flame');
const LEFT = 66, BASE = 774, ROW = 18;

function add(parent, tag, attrs, text) {
  const el = document.createElementNS(NS, tag);
  for (const key in attrs) el.setAttribute(key, attrs[key]);
  if (text) el.textContent = text;
  parent.appendChild(el);
  return el;
}
function frame(x, w, level, tier) {
  const y = BASE - level * ROW;
  add(chart, 'rect', { x: x - LEFT, y, width: w, height: ROW, fill: TIER[tier] });
  if (w > 3) add(chart, 'rect', { x: x - LEFT, y, width: w, height: 1, fill: '#36a', opacity: 0.1 });
  if (w > 6) add(chart, 'rect', { x: x - LEFT, y, width: 1, height: ROW, fill: '#36a', opacity: 0.15 });
}
const records = source => source.trim().split(/[|\n]/);

for (const record of records(STACKS)) {
  const [x, w, base, runs] = record.split(' ');
  let level = +base;
  for (const [, tier, count] of runs.matchAll(/([a-zA-Z])(\d*)/g)) {
    const n = count === '' ? 1 : +count;
    for (let k = 0; k < n; k++) frame(+x, +w, level++, tier);
  }
}
let seed = 7;
function pick(list) {
  seed = (seed * 1103515245 + 12345) % 2147483648;
  return list[Math.floor(seed / 65536) % list.length];
}
for (const record of records(DENSE)) {
  const [x, w, base, levels, palette] = record.split(' ');
  for (let level = +base; level < +base + +levels; level++) {
    for (let dx = 0; dx < +w; dx += 2) {
      const tier = pick(palette);
      if (tier !== '.') frame(+x + dx, Math.min(2, w - dx), level, tier);
    }
  }
}
for (const record of records(LABELS)) {
  const [, x, w, level, text] = record.match(/^(\d+) (\d+) (\d+) (.*)$/);
  const box = add(chart, 'svg', { x: x - LEFT, y: BASE - level * ROW, width: w, height: ROW });
  add(box, 'text', { x: 0, y: 14 }, text);
}
add(chart, 'text', { x: 349, y: 788, class: 'small' }, '62% on stack, 5.71% stack top');

// Root frame
add(chart, 'path', { d: 'M.5 792V809.5H1135M0 792.5H1135', fill: 'none', stroke: '#999' });
add(chart, 'text', { x: 568, y: 806, 'text-anchor': 'middle' }, 'all stacks');
```
